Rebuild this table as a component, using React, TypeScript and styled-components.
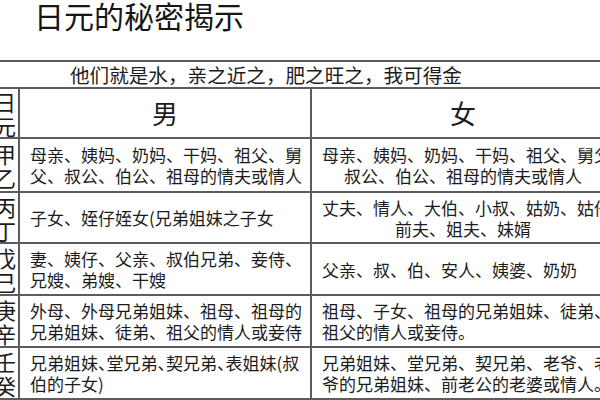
import React from "react";
import styled, { createGlobalStyle } from "styled-components";

const GlobalStyle = createGlobalStyle`
  html, body {
    margin: 0;
    padding: 0;
    background: #ffffff;
    overflow: hidden;
  }
  body {
    font-family: "Noto Sans CJK SC", "Noto Sans", sans-serif;
    color: #1c1c1c;
  }
`;

type Align = "left" | "center";

const rows: {
  stem: string[];
  height: number;
  male: string[];
  female: string[];
  femaleAlign: Align;
  maleTight?: boolean;
}[] = [
  {
    stem: ["甲", "乙"],
    height: 54,
    male: ["母亲、姨妈、奶妈、干妈、祖父、舅", "父、叔公、伯公、祖母的情夫或情人"],
    female: ["母亲、姨妈、奶妈、干妈、祖父、舅父、", "叔公、伯公、祖母的情夫或情人"],
    femaleAlign: "center",
  },
  {
    stem: ["丙", "丁"],
    height: 51,
    male: ["子女、姪仔姪女(兄弟姐妹之子女"],
    female: ["丈夫、情人、大伯、小叔、姑奶、姑仔、", "前夫、姐夫、妹婿"],
    femaleAlign: "center",
  },
  {
    stem: ["戊", "己"],
    height: 52,
    male: ["妻、姨仔、父亲、叔伯兄弟、妾侍、", "兄嫂、弟嫂、干嫂"],
    female: ["父亲、叔、伯、安人、姨婆、奶奶"],
    femaleAlign: "left",
  },
  {
    stem: ["庚", "辛"],
    height: 52,
    male: ["外母、外母兄弟姐妹、祖母、祖母的", "兄弟姐妹、徒弟、祖父的情人或妾侍"],
    female: ["祖母、子女、祖母的兄弟姐妹、徒弟、", "祖父的情人或妾侍。"],
    femaleAlign: "left",
  },
  {
    stem: ["壬", "癸"],
    height: 52,
    male: ["兄弟姐妹、堂兄弟、契兄弟、表姐妹(叔", "伯的子女)"],
    female: ["兄弟姐妹、堂兄弟、契兄弟、老爷、老", "爷的兄弟姐妹、前老公的老婆或情人。"],
    femaleAlign: "left",
    maleTight: true,
  },
];

const App = () => {
  return (
    <>
      <GlobalStyle />
      <Page>
        <Title>日元的秘密揭示</Title>
        <Table>
          <colgroup>
            <col style={{ width: 32 }} />
            <col style={{ width: 292 }} />
            <col style={{ width: 304 }} />
          </colgroup>
          <tbody>
            <Row h={27}>
              <Caption colSpan={3}>他们就是水，亲之近之，肥之旺之，我可得金</Caption>
            </Row>
            <Row h={44}>
              <StemCell>
                <StemChar>日</StemChar>
                <StemChar>元</StemChar>
              </StemCell>
              <HeadCell>男</HeadCell>
              <HeadCell>女</HeadCell>
            </Row>
            {rows.map((r) => (
              <Row h={r.height} key={r.stem.join("")}>
                <StemCell>
                  {r.stem.map((c) => (
                    <StemChar key={c}>{c}</StemChar>
                  ))}
                </StemCell>
                <Cell align="left">
                  {r.male.map((l, i) => (
                    <Line key={i} tight={r.maleTight && i === 0}>
                      {l}
                    </Line>
                  ))}
                </Cell>
                <Cell align={r.femaleAlign}>
                  {r.female.map((l, i) => (
                    <Line key={i}>{l}</Line>
                  ))}
                </Cell>
              </Row>
            ))}
          </tbody>
        </Table>
      </Page>
    </>
  );
};

export default App;

const Page = styled.div`
  width: 600px;
  height: 400px;
  overflow: hidden;
  display: flex;
  flex-direction: column;
`;

const Title = styled.h1`
  margin: 0;
  padding: 0 0 0 34px;
  height: 61px;
  font-size: 30px;
  font-weight: 400;
  line-height: 31px;
  color: #151515;
`;

const Table = styled.table`
  margin-left: -14px;
  width: 628px;
  flex-shrink: 0;
  table-layout: fixed;
  border-collapse: collapse;
`;

const Row = styled.tr<{ h: number }>`
  height: ${(p) => p.h}px;
`;

const Caption = styled.td`
  border: 2px solid #5c5c5c;
  padding: 0 0 0 82px;
  font-size: 19.6px;
  line-height: 24px;
  text-align: left;
  vertical-align: middle;
  white-space: nowrap;
`;

const StemCell = styled.td`
  border: 2px solid #5c5c5c;
  padding: 0 2px 0 0;
  text-align: right;
  vertical-align: middle;
`;

const StemChar = styled.div`
  font-size: 22px;
  line-height: 24px;
`;

const HeadCell = styled.td`
  border: 2px solid #5c5c5c;
  padding: 0;
  font-size: 26px;
  line-height: 30px;
  text-align: center;
  vertical-align: middle;
`;

const Cell = styled.td<{ align: Align }>`
  border: 2px solid #5c5c5c;
  padding: 0 10px;
  font-size: 17px;
  line-height: 21px;
  text-align: ${(p) => p.align};
  vertical-align: middle;
`;

const Line = styled.div<{ tight?: boolean }>`
  white-space: nowrap;
  font-feature-settings: ${(p) => (p.tight ? '"halt"' : "normal")};
`;
